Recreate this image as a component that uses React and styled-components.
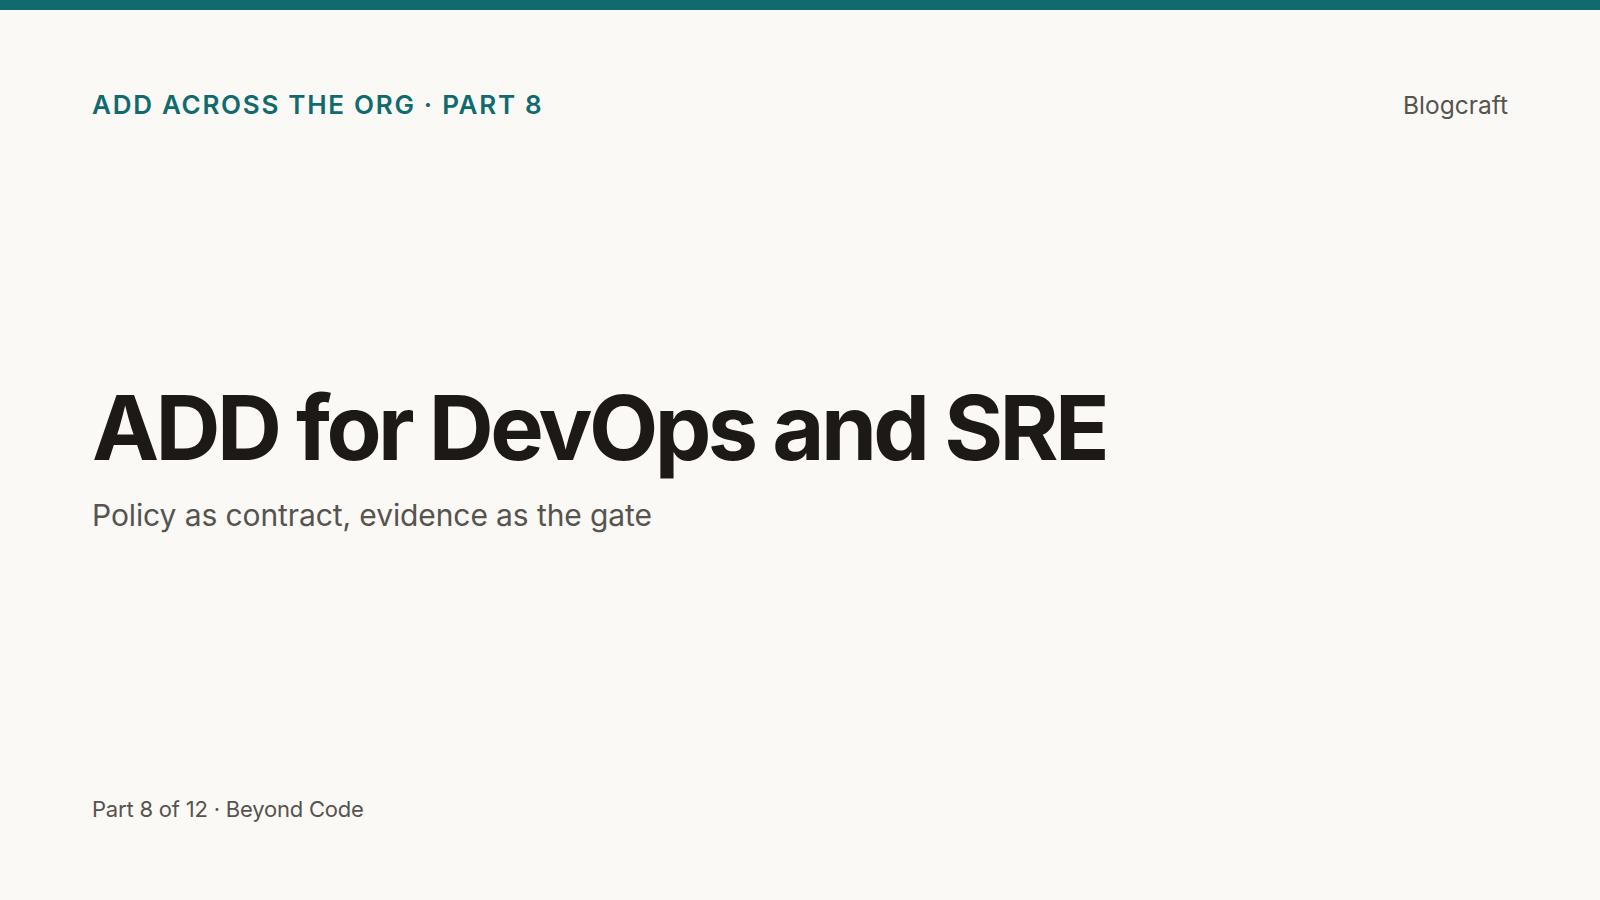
import styled, { createGlobalStyle } from "styled-components";

const GlobalStyle = createGlobalStyle`
    html, body {
        margin: 0;
        padding: 0;
        background: #faf9f5;
    }
`;

const App = () => {
    return (
        <>
            <GlobalStyle />
            <Slide>
                <AccentBar />
                <Content>
                    <Header>
                        <Eyebrow>ADD ACROSS THE ORG · PART 8</Eyebrow>
                        <Brand>Blogcraft</Brand>
                    </Header>
                    <Main>
                        <Title>ADD for DevOps and SRE</Title>
                        <Subtitle>Policy as contract, evidence as the gate</Subtitle>
                    </Main>
                    <Footer>Part 8 of 12 · Beyond Code</Footer>
                </Content>
            </Slide>
        </>
    );
};

export default App;

const Slide = styled.div`
    width: 1600px;
    height: 900px;
    display: flex;
    flex-direction: column;
    overflow: hidden;
    background: #faf9f5;
    font-family: Inter, "Liberation Sans", sans-serif;
`;

const AccentBar = styled.div`
    height: 10px;
    background: #0f6b6e;
`;

const Content = styled.div`
    flex: 1;
    display: flex;
    flex-direction: column;
    padding: 79px 92px 76px;
`;

const Header = styled.div`
    display: flex;
    justify-content: space-between;
    align-items: center;
`;

const Eyebrow = styled.div`
    font-size: 26px;
    line-height: 32px;
    font-weight: 600;
    letter-spacing: 1.72px;
    color: #0f6b6e;
`;

const Brand = styled.div`
    font-size: 24.5px;
    line-height: 32px;
    font-weight: 400;
    color: #57534e;
`;

const Main = styled.div`
    flex: 1;
    display: flex;
    flex-direction: column;
    justify-content: center;
    padding-bottom: 3px;
`;

const Title = styled.h1`
    margin: 0 0 17px;
    font-size: 90px;
    line-height: 100px;
    font-weight: 700;
    letter-spacing: -3.6px;
    color: #1c1917;
`;

const Subtitle = styled.div`
    font-size: 30px;
    line-height: 40px;
    font-weight: 400;
    letter-spacing: -0.1px;
    color: #57534e;
`;

const Footer = styled.div`
    font-size: 22px;
    line-height: 30px;
    font-weight: 400;
    letter-spacing: -0.2px;
    color: #57534e;
`;
